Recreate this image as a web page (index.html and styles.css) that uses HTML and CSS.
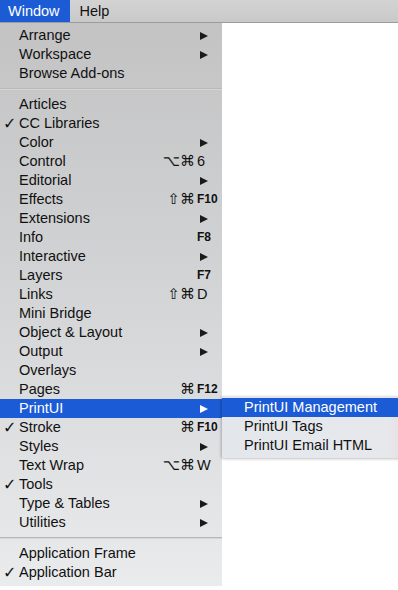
FILE: index.html
```html
<!DOCTYPE html>
<html>
<head>
<meta charset="utf-8">
<link rel="stylesheet" href="styles.css">
</head>
<body>
<div class="screen">
  <div class="menubar">
    <div class="mb-item active">Window</div>
    <div class="mb-item">Help</div>
  </div>
  <div class="menu">
    <div class="row"><span class="chk"></span><span class="lbl">Arrange</span><span class="mods"></span><span class="key"><i class="arr"></i></span></div>
    <div class="row"><span class="chk"></span><span class="lbl">Workspace</span><span class="mods"></span><span class="key"><i class="arr"></i></span></div>
    <div class="row"><span class="chk"></span><span class="lbl">Browse Add-ons</span><span class="mods"></span><span class="key"></span></div>
    <div class="sep"></div>
    <div class="row"><span class="chk"></span><span class="lbl">Articles</span><span class="mods"></span><span class="key"></span></div>
    <div class="row"><span class="chk">✓</span><span class="lbl">CC Libraries</span><span class="mods"></span><span class="key"></span></div>
    <div class="row"><span class="chk"></span><span class="lbl">Color</span><span class="mods"></span><span class="key"><i class="arr"></i></span></div>
    <div class="row"><span class="chk"></span><span class="lbl">Control</span><span class="mods">⌥⌘</span><span class="key">6</span></div>
    <div class="row"><span class="chk"></span><span class="lbl">Editorial</span><span class="mods"></span><span class="key"><i class="arr"></i></span></div>
    <div class="row"><span class="chk"></span><span class="lbl">Effects</span><span class="mods">⇧⌘</span><span class="key fk">F10</span></div>
    <div class="row"><span class="chk"></span><span class="lbl">Extensions</span><span class="mods"></span><span class="key"><i class="arr"></i></span></div>
    <div class="row"><span class="chk"></span><span class="lbl">Info</span><span class="mods"></span><span class="key fk">F8</span></div>
    <div class="row"><span class="chk"></span><span class="lbl">Interactive</span><span class="mods"></span><span class="key"><i class="arr"></i></span></div>
    <div class="row"><span class="chk"></span><span class="lbl">Layers</span><span class="mods"></span><span class="key fk">F7</span></div>
    <div class="row"><span class="chk"></span><span class="lbl">Links</span><span class="mods">⇧⌘</span><span class="key">D</span></div>
    <div class="row"><span class="chk"></span><span class="lbl">Mini Bridge</span><span class="mods"></span><span class="key"></span></div>
    <div class="row"><span class="chk"></span><span class="lbl">Object &amp; Layout</span><span class="mods"></span><span class="key"><i class="arr"></i></span></div>
    <div class="row"><span class="chk"></span><span class="lbl">Output</span><span class="mods"></span><span class="key"><i class="arr"></i></span></div>
    <div class="row"><span class="chk"></span><span class="lbl">Overlays</span><span class="mods"></span><span class="key"></span></div>
    <div class="row"><span class="chk"></span><span class="lbl">Pages</span><span class="mods">⌘</span><span class="key fk">F12</span></div>
    <div class="row sel"><span class="chk"></span><span class="lbl">PrintUI</span><span class="mods"></span><span class="key"><i class="arr"></i></span></div>
    <div class="row"><span class="chk">✓</span><span class="lbl">Stroke</span><span class="mods">⌘</span><span class="key fk">F10</span></div>
    <div class="row"><span class="chk"></span><span class="lbl">Styles</span><span class="mods"></span><span class="key"><i class="arr"></i></span></div>
    <div class="row"><span class="chk"></span><span class="lbl">Text Wrap</span><span class="mods">⌥⌘</span><span class="key">W</span></div>
    <div class="row"><span class="chk">✓</span><span class="lbl">Tools</span><span class="mods"></span><span class="key"></span></div>
    <div class="row"><span class="chk"></span><span class="lbl">Type &amp; Tables</span><span class="mods"></span><span class="key"><i class="arr"></i></span></div>
    <div class="row"><span class="chk"></span><span class="lbl">Utilities</span><span class="mods"></span><span class="key"><i class="arr"></i></span></div>
    <div class="sep"></div>
    <div class="row"><span class="chk"></span><span class="lbl">Application Frame</span><span class="mods"></span><span class="key"></span></div>
    <div class="row"><span class="chk">✓</span><span class="lbl">Application Bar</span><span class="mods"></span><span class="key"></span></div>
  </div>
  <div class="submenu">
    <div class="srow sel">PrintUI Management</div>
    <div class="srow">PrintUI Tags</div>
    <div class="srow">PrintUI Email HTML</div>
  </div>
</div>
</body>
</html>
```

FILE: styles.css
```css
html, body {
  margin: 0;
  padding: 0;
  background: #ffffff;
}

.screen {
  position: relative;
  width: 398px;
  height: 590px;
  overflow: hidden;
  font-family: "Liberation Sans", Arial, sans-serif;
  font-size: 14.5px;
  color: #111111;
}

.menubar {
  display: flex;
  height: 22px;
  background: linear-gradient(#d3d3d4, #c9c9ca);
  border-bottom: 1px solid #9c9c9c;
}

.mb-item {
  display: flex;
  align-items: center;
  padding: 0 10px;
  line-height: 22px;
}

.mb-item.active {
  background: #1c5bd6;
  color: #ffffff;
  padding: 0 10px 0 8px;
}

.menu {
  width: 222px;
  padding: 3px 0 4px;
  background: linear-gradient(#c3c3c4 0%, #d0d1d2 40%, #dfe0e2 75%, #e9ebed 100%);
}

.row {
  display: grid;
  grid-template-columns: 19px 1fr auto 25px;
  align-items: center;
  height: 19px;
  line-height: 19px;
  white-space: nowrap;
}

.row.sel {
  background: #1c5bd6;
  color: #ffffff;
}

.chk {
  font-family: "DejaVu Sans", sans-serif;
  font-size: 16px;
  font-weight: bold;
  padding-left: 3px;
}

.mods {
  font-family: "DejaVu Sans", sans-serif;
  font-size: 15px;
  text-align: right;
  padding-right: 2px;
}

.key {
  display: flex;
  align-items: center;
  height: 19px;
  font-size: 14.5px;
}

.key.fk {
  font-size: 12px;
  font-weight: bold;
}

.arr {
  display: block;
  width: 0;
  height: 0;
  margin-left: 3px;
  border-top: 4.5px solid transparent;
  border-bottom: 4.5px solid transparent;
  border-left: 8px solid #1a1a1a;
}

.row.sel .arr {
  border-left-color: #ffffff;
}

.sep {
  height: 12px;
  display: flex;
  align-items: center;
}

.sep::before {
  content: "";
  display: block;
  width: 100%;
  height: 2px;
  background: linear-gradient(#b7b8b9 50%, #d5d6d7 50%);
}

.submenu {
  position: absolute;
  left: 222px;
  top: 396px;
  width: 184px;
  padding: 2px 0 3px;
  background: linear-gradient(90deg, #e3e7ec 0%, #e6e8ec 90%, #eadde2 100%);
  border-radius: 0 0 0 4px;
  box-shadow: -1px 1px 3px rgba(0, 0, 0, 0.25);
}

.srow {
  height: 19px;
  line-height: 19px;
  padding-left: 22px;
  white-space: nowrap;
}

.srow.sel {
  background: #1c5bd6;
  color: #ffffff;
}
```
